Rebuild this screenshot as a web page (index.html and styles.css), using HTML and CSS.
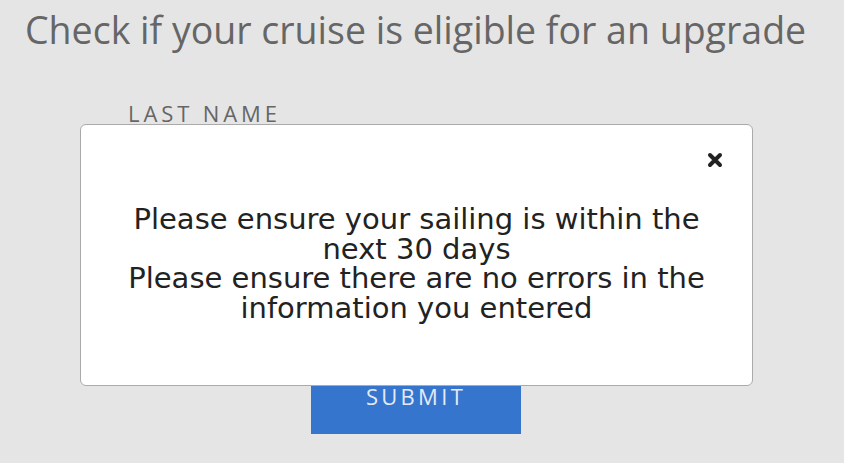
FILE: index.html
```html
<!DOCTYPE html>
<html lang="en">
<head>
    <meta charset="UTF-8">
    <meta name="viewport" content="width=device-width, initial-scale=1.0">
    <title>Cruise Upgrade</title>
    <link rel="stylesheet" href="styles.css">
</head>
<body>
    <h1 class="page-title">Check if your cruise is eligible for an upgrade</h1>

    <form class="upgrade-form">
        <label class="field-label" for="last-name">LAST NAME</label>
        <input class="field-input" id="last-name" type="text">
        <div class="form-actions">
            <button class="submit-btn" type="button">SUBMIT</button>
        </div>
    </form>

    <div class="modal">
        <button class="modal-close" type="button" aria-label="Close">
            <svg width="16" height="16" viewBox="0 0 16 16">
                <path d="M3 3 L13 13 M13 3 L3 13" stroke="#222" stroke-width="4" stroke-linecap="round"/>
            </svg>
        </button>
        <div class="modal-body">
            <p>Please ensure your sailing is within the next 30 days</p>
            <p>Please ensure there are no errors in the information you entered</p>
        </div>
    </div>
</body>
</html>
```

FILE: styles.css
```css
body {
    margin: 0;
    background: #e5e5e5;
    font-family: "Open Sans", "Liberation Sans", sans-serif;
    color: #666;
}
.page-title {
    margin: 0;
    padding: 7px 0 0 25px;
    font-size: 37.5px;
    font-weight: 400;
    line-height: 46px;
    color: #666;
}
.upgrade-form {
    padding: 47px 0 0 80px;
    width: 672px;
}
.field-label {
    display: block;
    padding-left: 48px;
    font-size: 22px;
    letter-spacing: 3.9px;
    line-height: 26px;
}
.field-input {
    display: block;
    box-sizing: border-box;
    width: 100%;
    height: 48px;
    margin-top: 2px;
    border: 1px solid #aaa;
    border-radius: 6px;
}
.form-actions {
    display: flex;
    justify-content: center;
    padding-top: 194px;
}
.submit-btn {
    width: 210px;
    padding: 14px 0 26px;
    border: none;
    background: #3575cd;
    color: #e4eaf4;
    font-family: "Open Sans", "Liberation Sans", sans-serif;
    font-size: 22px;
    line-height: 24px;
    letter-spacing: 3.3px;
}
.modal {
    position: fixed;
    left: 80px;
    top: 124px;
    box-sizing: border-box;
    width: 673px;
    height: 262px;
    background: #fff;
    border: 1px solid #aaa;
    border-radius: 6px;
}
.modal-close {
    position: absolute;
    top: 27px;
    right: 29px;
    padding: 0;
    border: none;
    background: none;
}
.modal-close svg {
    display: block;
}
.modal-body {
    padding: 80px 40px 0;
    text-align: center;
    font-family: "DejaVu Sans", sans-serif;
    font-size: 29px;
    line-height: 29.5px;
    color: #222;
}
.modal-body p {
    margin: 0;
}
```
